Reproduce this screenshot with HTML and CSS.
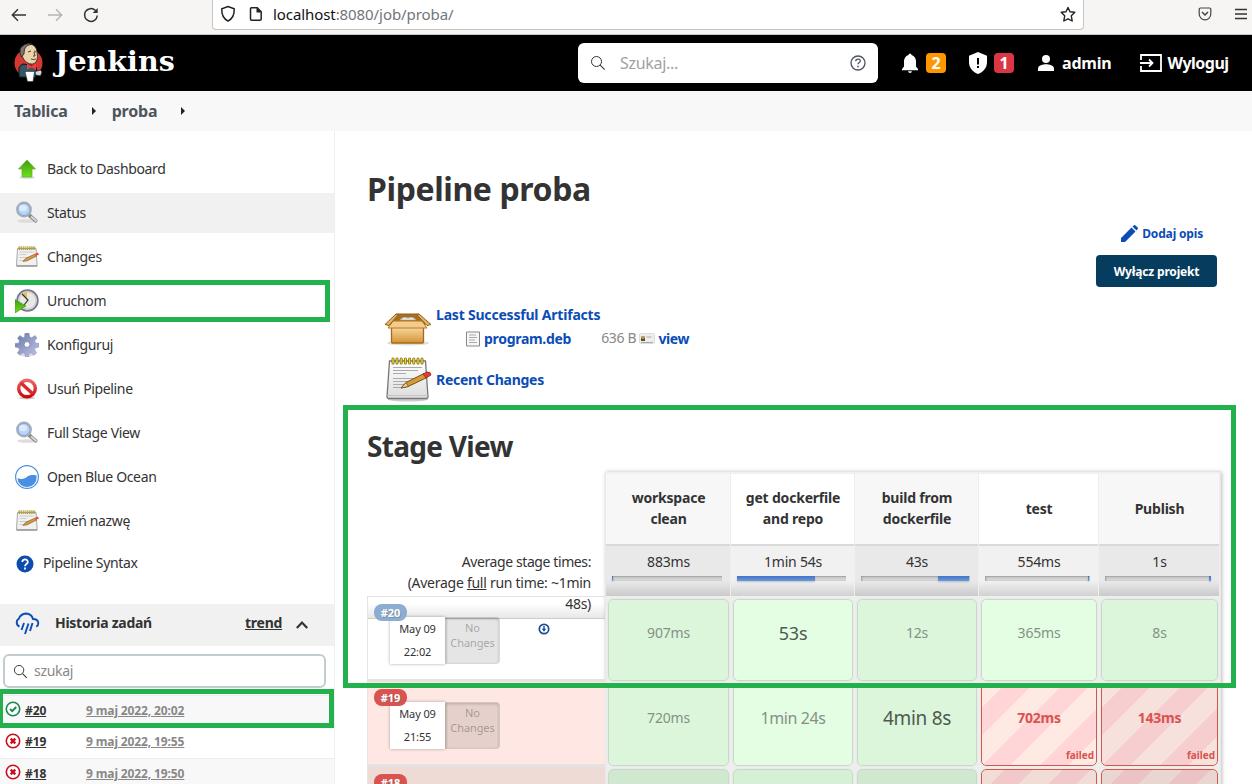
FILE: index.html
```html
<!DOCTYPE html>
<html lang="pl">
<head>
<meta charset="utf-8">
<title>proba [Jenkins]</title>
<link rel="stylesheet" href="styles.css">
</head>
<body>
<svg class="defs" width="0" height="0" aria-hidden="true">
  <defs>
    <linearGradient id="g-green" x1="0" y1="0" x2="0" y2="1"><stop offset="0" stop-color="#3f9c12"/><stop offset="1" stop-color="#6fe01a"/></linearGradient>
    <linearGradient id="g-paper" x1="0" y1="0" x2="0" y2="1"><stop offset="0" stop-color="#fff"/><stop offset="1" stop-color="#dcdcdc"/></linearGradient>
    <linearGradient id="g-box" x1="0" y1="0" x2="0" y2="1"><stop offset="0" stop-color="#fbd9a0"/><stop offset="1" stop-color="#d29438"/></linearGradient>
    <linearGradient id="g-red" x1="0" y1="0" x2="0" y2="1"><stop offset="0" stop-color="#e96a6a"/><stop offset="1" stop-color="#cc0a0a"/></linearGradient>
    <linearGradient id="g-gear" x1="0" y1="0" x2="1" y2="1"><stop offset="0" stop-color="#6178a8"/><stop offset="1" stop-color="#c9c5ea"/></linearGradient>
    <symbol id="i-search" viewBox="0 0 24 24">
      <ellipse cx="12" cy="20" rx="10" ry="1.800" fill="#ddd"/>
      <path d="M14.500 14.500l6.300 5.300" stroke="#888" stroke-width="3.600" stroke-linecap="round"/>
      <path d="M16.500 16l4.500 3.800" stroke="#d9d9d9" stroke-width="1.800" stroke-linecap="round"/>
      <circle cx="9" cy="8.500" r="7.200" fill="#b9d4f5" stroke="#aaa" stroke-width="1.400"/>
      <circle cx="9" cy="8.500" r="6" fill="none" stroke="#7fa3d6" stroke-width="1"/>
      <ellipse cx="8" cy="7" rx="4" ry="3.300" fill="#dcebfc"/>
    </symbol>
    <symbol id="i-note" viewBox="0 0 48 48">
      <ellipse cx="24" cy="44.500" rx="20" ry="2" fill="#ccc"/>
      <path d="M5.500 6h36l2.500 36a1.500 1.500 0 0 1-1.500 1.500h-38A1.500 1.500 0 0 1 3 42z" fill="url(#g-paper)" stroke="#777" stroke-width="1.300"/>
      <path d="M3.500 40.500h40" stroke="#c4c4c4"/>
      <path d="M9 12.500h29M9 15.500h25M9 18.500h13M9 23.500h27M9 26.500h24M9 29.500h20M9 32.500h10" stroke="#aaa" stroke-width="1"/>
      <path d="M9 4v4M13 4v4M17.200 4v4M21.400 4v4M25.600 4v4M29.800 4v4M34 4v4M38 4v4" stroke="#85700a" stroke-width="3" stroke-linecap="round"/>
      <path d="M9 4v4M13 4v4M17.200 4v4M21.400 4v4M25.600 4v4M29.800 4v4M34 4v4M38 4v4" stroke="#ecd83b" stroke-width="1.400" stroke-linecap="round"/>
      <path d="M17 33l5-5.500 18-9 3 4-19 9z" fill="#d69b39" stroke="#78500f"/>
      <path d="M17 33l5-5.500 2.500 4z" fill="#e8cf9f" stroke="#78500f" stroke-width=".8"/>
      <path d="M39 19l4-2q4-.5 4 3l-5 3z" fill="#e33c35" stroke="#8c2b20" stroke-width=".8"/>
    </symbol>
    <symbol id="i-notesm" viewBox="0 0 24 24">
      <path d="M2.500 3.500h18.500l1.200 17.300H1.500z" fill="#f1f1f1" stroke="#a8a8a8"/>
      <path d="M1.500 21h20.700" stroke="#999" stroke-width="1.500"/>
      <path d="M4.500 7h14M4.500 9.500h7M4.500 12.500h12M4.500 15.500h6" stroke="#ccc"/>
      <path d="M3.500 3.200h17" stroke="#9b8e32" stroke-width="3.200" stroke-dasharray="1.500 .6"/>
      <path d="M3.700 2.700h16.500" stroke="#d4c04c" stroke-width="1.500" stroke-dasharray="1 1.100"/>
      <path d="M8 16.300l3-3.100 9-4 1.600 1.800-9.600 4.800z" fill="#d89d40" stroke="#8e6524" stroke-width=".8"/>
      <path d="M19.500 9l3.500-1.400 1 2-3.300 1.500z" fill="#e6523e"/>
    </symbol>
    <symbol id="i-fail" viewBox="0 0 16 16">
      <circle cx="8" cy="8" r="6.700" fill="#fff" stroke="#cb0f1f" stroke-width="1.600"/>
      <path d="M5.700 5.700l4.600 4.600M10.300 5.700l-4.600 4.600" stroke="#cb0f1f" stroke-width="2.400"/>
    </symbol>
    <symbol id="i-lens" viewBox="0 0 16 16">
      <circle cx="6.500" cy="6.500" r="5" fill="none" stroke="currentColor" stroke-width="1"/><path d="M10.200 10.200l4.500 4.500" stroke="currentColor" stroke-width="1.100"/>
    </symbol>
  </defs>
</svg>

<div class="window">
  <div class="browser">
    <div class="nav">
      <svg width="16" height="16" viewBox="0 0 16 16" fill="none" stroke="#2e3436" stroke-width="1.400"><path d="M15 8H1.500M7 2.300L1.300 8 7 13.700"/></svg>
      <svg width="16" height="16" viewBox="0 0 16 16" fill="none" stroke="#b4b4b3" stroke-width="1.400"><path d="M1 8h13.500M9 2.300L14.700 8 9 13.700"/></svg>
      <svg width="16" height="16" viewBox="0 0 16 16" fill="none" stroke="#2e3436" stroke-width="1.500"><path d="M14.300 8.500A6.400 6.400 0 1 1 12.300 3.300l1.500 1.500"/><path d="M14.700 1v5h-5z" fill="#2e3436" stroke="none"/></svg>
    </div>
    <div class="urlbar">
      <svg width="16" height="18" viewBox="0 0 16 18" fill="none" stroke="#222" stroke-width="1.500"><path d="M8 1.500l6.200 2.300c.3 5-1 9.500-6.200 12.400C2.800 13.300 1.500 8.800 1.800 3.800z"/></svg>
      <svg class="page" width="14" height="16" viewBox="0 0 14 16" fill="none" stroke="#222" stroke-width="1.500"><path d="M2.500 1.800h5.800l3.900 4V13a1.200 1.200 0 0 1-1.200 1.200H2.700A1.200 1.200 0 0 1 1.500 13V2.800a1 1 0 0 1 1-1z"/><path d="M7.500 1.500v5h5z" fill="#222" stroke="none"/></svg>
      <span class="url">localhost<i>:8080/job/proba/</i></span>
      <svg class="star" width="16" height="17" viewBox="0 0 16 17" fill="none" stroke="#222" stroke-width="1.400" stroke-linejoin="round"><path d="M8 1.500l2 4.300 4.800.5-3.500 3.500.9 5.200L8 12.800 3.800 15l.9-5.200L1.200 6.300l4.800-.5z"/></svg>
    </div>
    <div class="tools">
      <svg width="14" height="16" viewBox="0 0 14 16" fill="none" stroke="#444" stroke-width="1.200"><path d="M2.500 2h9a1.300 1.300 0 0 1 1.300 1.300V8A5.800 5.800 0 0 1 1.200 8V3.300A1.300 1.300 0 0 1 2.500 2z"/><path d="M4 6l3 3 3-3" stroke-width="1.500"/></svg>
      <svg width="14" height="14" viewBox="0 0 14 14" stroke="#333" stroke-width="1.400"><path d="M1 3.500h12M1 8h12M1 12.500h12"/></svg>
    </div>
  </div>

  <header class="header">
    <div class="brand">
      <svg width="30" height="42" viewBox="0 0 30 42">
        <circle cx="14.500" cy="21" r="14" fill="#d33833"/>
        <path d="M5 35V26q1-3 4-4l7 1 6 2 1 5-2 6z" fill="#33576a" stroke="#111"/>
        <path d="M8 14Q4 5 13 2q9-1 10 8 2 10-4 12-7 1-11-8z" fill="#ead3ad" stroke="#222" stroke-width=".8"/>
        <path d="M7.500 15Q3 6 11 2.500q4-1.500 7-.5-5 1-7 4-1 3-1 6z" fill="#7b7773" stroke="#222" stroke-width=".8"/>
        <path d="M14 10l3-1m3 0l2 1m-5 7q2 1 5 0m-2-7l1 4h-2" stroke="#3a2d24" fill="none" stroke-width=".9"/>
        <path d="M13 21.500l4.500 2.300 4.500-2v6l-4.500-2.300-4.500 2z" fill="#ef3d3a"/>
        <path d="M11 29.500h9.500l-1.500 10h-5.500z" fill="#fff" stroke="#333" stroke-width=".6"/>
        <path d="M21 29.500l5.500-1.500 1.500 2-1.500 4-5-1z" fill="#d5d9dc" stroke="#222" stroke-width=".8"/>
      </svg>
      <span>Jenkins</span>
    </div>
    <div class="search">
      <svg class="lens" width="16" height="16"><use href="#i-lens"/></svg>
      <span>Szukaj...</span>
      <svg width="16" height="16" viewBox="0 0 16 16" fill="none" stroke="#4d545d" stroke-width="1.300"><circle cx="8" cy="8" r="7"/><path d="M5.700 6.200C5.800 3.300 10.400 3.400 10.300 6c0 1.600-2.300 1.500-2.300 3.300"/><path d="M8 10.800v1.500" stroke-width="1.600"/></svg>
    </div>
    <svg class="bell" width="18" height="22" viewBox="0 0 18 22" fill="#fff"><path d="M9 1.500q1.300 0 1.600 1.500Q15 4.500 15 10v4.500l2 2.500v1.200H1V17l2-2.500V10q0-5.500 4.400-7Q7.700 1.500 9 1.500zM7 19.200h4q-.3 1.800-2 1.800t-2-1.800z"/></svg>
    <span class="count orange">2</span>
    <svg class="shield" width="18" height="22" viewBox="0 0 18 22"><path d="M9 0l9 3.700V10c0 6-4 10-9 12C4 20 0 16 0 10V3.700z" fill="#fff"/><path d="M9 6v6.500M9 14v2" stroke="#000" stroke-width="2"/></svg>
    <span class="count red">1</span>
    <svg class="person" width="18" height="18" viewBox="0 0 18 18" fill="#fff"><circle cx="9" cy="5" r="4"/><path d="M1 17v-2.500c0-3 5-4.200 8-4.200s8 1.200 8 4.200V17z"/></svg>
    <span class="user">admin</span>
    <svg class="exit" width="22" height="20" viewBox="0 0 22 20" fill="none" stroke="#fff" stroke-width="1.800"><path d="M1 7V2h20v16H1v-5M0 10h12M9 6.500l3.500 3.500L9 13.500"/></svg>
    <span class="logout">Wyloguj</span>
  </header>

  <nav class="crumbs"><span>Tablica</span><b></b><span>proba</span><b></b></nav>

  <div class="main">
    <aside class="side">
      <div class="task"><svg width="24" height="24" viewBox="0 0 24 24"><ellipse cx="12" cy="20.500" rx="8" ry="1.500" fill="#ddd"/><path d="M12 3l8.500 9h-3.500v8H7v-8H3.500z" fill="url(#g-green)" stroke="#5caf35" stroke-width=".7"/></svg><span>Back to Dashboard</span></div>
      <div class="task active"><svg width="24" height="24"><use href="#i-search"/></svg><span>Status</span></div>
      <div class="task"><svg width="24" height="24"><use href="#i-notesm"/></svg><span>Changes</span></div>
      <div class="task"><svg width="24" height="24" viewBox="0 0 24 24"><circle cx="12.500" cy="11.500" r="10.300" fill="#e8e8e4" stroke="#777792" stroke-width="1.800"/><circle cx="12.500" cy="11.500" r="8.500" fill="none" stroke="#c9c9c9"/><path d="M12 11L7 5l5-2z" fill="#e6bf43"/><path d="M7 5l6 6-4 5" stroke="#333" stroke-width="1.200" fill="none"/><path d="M0 10.500l11 6.500L0 24z" fill="url(#g-green)" stroke="#4b9b25" stroke-width=".7"/></svg><span>Uruchom</span></div>
      <div class="task"><svg width="24" height="24" viewBox="0 0 24 24"><ellipse cx="12" cy="21.500" rx="8" ry="2" fill="#ddd"/><path d="M10 0h4l.7 4 2 .8L20 2.500 22 5l-2.500 3 .8 2 3.700.5v3.500l-3.700.7-.8 2 2 3.300-2.500 2-3-2.200-2 .7L13.500 24h-3l-.7-3.500-2-.8-3 2.300-2.500-2L4.500 17l-.8-2.300L0 14v-3.500l3.700-.5.8-2L2.500 5 5 2.500l3 2.200 1.500-.7z" fill="url(#g-gear)" stroke="#8c94bb" stroke-width=".6"/><circle cx="12" cy="11.500" r="3" fill="#fff" stroke="#8089b0"/></svg><span>Konfiguruj</span></div>
      <div class="task"><svg width="24" height="24" viewBox="0 0 24 24"><ellipse cx="12" cy="21" rx="8" ry="1.500" fill="#ccc"/><circle cx="12" cy="11.500" r="8.300" fill="#fff" stroke="url(#g-red)" stroke-width="3.400"/><path d="M6 6l12 11" stroke="#db2828" stroke-width="3.400"/></svg><span>Usuń Pipeline</span></div>
      <div class="task"><svg width="24" height="24"><use href="#i-search"/></svg><span>Full Stage View</span></div>
      <div class="task"><svg width="24" height="24" viewBox="0 0 24 24"><circle cx="12" cy="12" r="11.400" fill="#fff" stroke="#4a90e2" stroke-width="1.200"/><path d="M2.400 13c3.600 1.500 6.600 1 9.100-.8 3.500-2.700 6.500-2.200 10.100-1.700v1.500A9.600 9.600 0 0 1 2.400 13z" fill="#4a90e2"/></svg><span>Open Blue Ocean</span></div>
      <div class="task"><svg width="24" height="24"><use href="#i-notesm"/></svg><span>Zmień nazwę</span></div>
      <div class="task syntax"><svg width="18" height="18" viewBox="0 0 18 18"><circle cx="9" cy="9" r="8.500" fill="#0b4cad"/><path d="M6.300 7c0-3.500 5.600-3.400 5.500 0 0 2-2.800 2-2.800 4.200M9 12.500v2" stroke="#fff" stroke-width="1.800" fill="none"/></svg><span>Pipeline Syntax</span></div>

      <div class="history">
        <svg width="26" height="24" viewBox="0 0 26 24" fill="none" stroke="#0b4cb5" stroke-width="1.900"><path d="M5.500 14.500A4.300 4.300 0 0 1 4.800 6.800Q6.500 2 12 1.500q5.500.3 7 5.500 5 0 5.300 4 0 2.500-2 3.700"/><path d="M10 11L7.500 18M14.500 11.500L11 22M18.500 11l-2.500 8"/></svg>
        <strong>Historia zadań</strong><u>trend</u>
        <svg class="chev" width="14" height="10" viewBox="0 0 14 10" fill="none" stroke="#333" stroke-width="2.200"><path d="M1.800 8L7 2.500 12.200 8"/></svg>
      </div>
      <div class="filter"><svg width="15" height="15"><use href="#i-lens"/></svg><span>szukaj</span></div>
      <div class="builds">
        <div class="build odd"><svg width="16" height="16" viewBox="0 0 16 16"><circle cx="8" cy="8" r="6.700" fill="#fff" stroke="#158a4b" stroke-width="1.600"/><path d="M5 8l2.200 2.200L11.200 6" stroke="#158a4b" stroke-width="1.900" fill="none"/></svg><u class="num">#20</u><u class="when">9 maj 2022, 20:02</u></div>
        <div class="build"><svg width="16" height="16"><use href="#i-fail"/></svg><u class="num">#19</u><u class="when">9 maj 2022, 19:55</u></div>
        <div class="build odd"><svg width="16" height="16"><use href="#i-fail"/></svg><u class="num">#18</u><u class="when">9 maj 2022, 19:50</u></div>
      </div>
    </aside>

    <main class="content">
      <h1>Pipeline proba</h1>
      <div class="actions">
        <div class="add"><svg width="17" height="17" viewBox="0 0 17 17" fill="#0b4cb5"><path d="M0 17v-4L10.500 2.500l4 4L4 17zM11.500 1.500L13 .2q.8-.5 1.500.2l2.200 2.200q.6.800 0 1.400L15.500 5.500z"/></svg><span>Dodaj opis</span></div>
        <div class="disable"><span>Wyłącz projekt</span></div>
      </div>
      <div class="artifact">
        <svg width="48" height="36" viewBox="0 0 48 36"><ellipse cx="24" cy="31" rx="21" ry="2.500" fill="#ddd"/><path d="M12 2h23l7 10H5z" fill="#a8701e" stroke="#8b5c17"/><path d="M16 8q3-4 8-2 5-2 8 2z" fill="#eee" stroke="#aaa" stroke-width=".7"/><path d="M7.500 15h32v15a1 1 0 0 1-1 1h-30a1 1 0 0 1-1-1z" fill="url(#g-box)" stroke="#a56b15" stroke-width="1.300"/><path d="M9 9h29l5 7H4z" fill="#f5cb8b" stroke="#b07a25"/><path d="M12 2L1 12.500l4 1L14 3zM35 2l12 10.500-4 1L33 3z" fill="#e6b469" stroke="#90601b"/><path d="M9 20h29" stroke="#edc17a"/></svg>
        <div class="files">
          <a>Last Successful Artifacts</a>
          <div class="file"><svg width="16" height="16" viewBox="0 0 16 16"><path d="M1.500 1h13v14h-13z" fill="#f7f7f7" stroke="#888"/><path d="M4 4h7M4 6.500h8M4 9h6M4 11.500h8" stroke="#aaa"/></svg><a>program.deb</a><span>636 B</span><svg class="card" width="17" height="12" viewBox="0 0 17 12"><rect x=".5" y=".5" width="15" height="10" rx="1" fill="#eee" stroke="#ddd"/><rect x="2" y="3" width="4" height="4" fill="#cc9b52"/><path d="M2 8V5l2 1 2-1v3z" fill="#415c35"/><path d="M7.500 4h5M2 9.500h12" stroke="#aaa"/></svg><a class="view">view</a></div>
        </div>
      </div>
      <div class="recent"><svg width="48" height="48"><use href="#i-note"/></svg><a>Recent Changes</a></div>
      <h2>Stage View</h2>

      <div class="stages">
        <div class="runs">
          <div class="average"><span>Average stage times:</span><br>(Average <u>full</u> run time: ~1min<br>48s)</div>
          <div class="run ok"><span class="badge">#20</span><div class="stamp"><div class="date">May 09<br>22:02</div><div class="nochange">No<br>Changes</div></div><svg class="dl" width="12" height="12" viewBox="0 0 12 12"><circle cx="6" cy="6" r="4.700" fill="#fff" stroke="#204d91" stroke-width="1.700"/><path d="M5.300 3h1.400v2.700h1.600L6 8.800 3.700 5.700h1.600z" fill="#204d91"/></svg></div>
          <div class="run bad"><span class="badge">#19</span><div class="stamp"><div class="date">May 09<br>21:55</div><div class="nochange">No<br>Changes</div></div></div>
          <div class="run bad dark"><span class="badge">#18</span></div>
        </div>
        <div class="grid">
          <div class="head alt">workspace<br>clean</div><div class="head">get dockerfile<br>and repo</div><div class="head alt">build from<br>dockerfile</div><div class="head">test</div><div class="head alt">Publish</div>
          <div class="avg alt"><span>883ms</span><i><b class="p1"></b></i></div><div class="avg"><span>1min 54s</span><i><b class="p2"></b></i></div><div class="avg alt"><span>43s</span><i><b class="p3"></b></i></div><div class="avg"><span>554ms</span><i><b class="p4"></b></i></div><div class="avg alt"><span>1s</span><i><b class="p5"></b></i></div>
          <div class="cell alt"><span>907ms</span></div><div class="cell"><span class="t4">53s</span></div><div class="cell alt"><span>12s</span></div><div class="cell"><span>365ms</span></div><div class="cell alt"><span>8s</span></div>
          <div class="cell alt"><span>720ms</span></div><div class="cell"><span class="t3">1min 24s</span></div><div class="cell alt"><span class="t5">4min 8s</span></div><div class="cell failed"><span>702ms</span><em>failed</em></div><div class="cell failed alt"><span>143ms</span><em>failed</em></div>
          <div class="cell alt dim"></div><div class="cell dim"></div><div class="cell alt dim"></div><div class="cell failed dim"></div><div class="cell failed alt dim"></div>
        </div>
      </div>
    </main>
  </div>
  <div class="mark m1"></div><div class="mark m2"></div><div class="mark m3"></div>
</div>
</body>
</html>
```

FILE: styles.css
```css
* { box-sizing: border-box; }
body { margin: 0; font-family: "Noto Sans", sans-serif; font-size: 14px; color: #333; background: #fff; }
svg { display: block; flex: none; }
.defs { position: absolute; }
.window { position: relative; width: 1252px; height: 784px; overflow: hidden; }

.browser { display: flex; height: 35px; background: #f6f5f4; border-bottom: 1px solid #c9c5c1; }
.nav { display: flex; gap: 20px; width: 212px; padding: 7px 0 0 11px; }
.urlbar { display: flex; width: 872px; height: 30px; padding: 5px 7px 0 7px; background: #fff; border: 1px solid #c8c3bd; border-top: 0; border-radius: 0 0 4px 4px; }
.urlbar .page { margin: 1px 0 0 13px; }
.url { margin: -1px 0 0 10px; font-size: 15px; line-height: 20px; color: #111; letter-spacing: -.08px; }
.url i { font-style: normal; color: #74747a; }
.star { margin-left: auto; margin-top: 1px; }
.tools { display: flex; gap: 22px; padding: 6px 0 0 114px; }

.header { display: flex; align-items: center; height: 56px; background: #000; color: #fff; font-size: 16px; font-weight: 700; }
.brand { display: flex; align-items: center; width: 578px; padding-left: 14px; font: 700 28.5px "DejaVu Serif", serif; }
.brand span { margin: -4px 0 0 11px; }
.search { display: flex; align-items: center; width: 300px; height: 40px; padding: 0 12px; background: #fff; border-radius: 6px; color: #a0a0a3; font-weight: 400; letter-spacing: -.3px; }
.search .lens { color: #333; margin-right: 14px; }
.search span { flex: 1; }
.bell { margin-left: 23px; }
.count { width: 20px; height: 20px; margin-left: 7px; border-radius: 4px; text-align: center; line-height: 20px; }
.orange { background: #ff9800; }
.red { background: #dc3545; }
.shield { margin-left: 23px; }
.person { margin-left: 23px; }
.user { margin-left: 7px; letter-spacing: -.2px; }
.exit { margin-left: 29px; }
.logout { margin-left: 5px; letter-spacing: -.5px; }

.crumbs { display: flex; align-items: center; height: 40px; padding-left: 14px; background: #f8f8f8; color: #4d545d; font-size: 16px; font-weight: 700; letter-spacing: -.2px; }
.crumbs b { width: 0; margin: 0 16px 0 24px; border: 4px solid transparent; border-left-color: #222; border-right: 0; }

.main { display: flex; height: 653px; }
.side { width: 335px; flex: none; padding-top: 18px; border-right: 1px solid #eee; }
.task { display: flex; align-items: center; height: 40px; margin-bottom: 4px; padding-left: 15px; letter-spacing: -.35px; }
.task span { margin: -2px 0 0 8px; }
.active { background: #f1f1f1; }
.syntax { height: 37px; padding-left: 16px; }
.syntax span { margin-left: 9px; }
.history { display: flex; align-items: center; height: 42px; margin-top: 22px; padding: 0 0 3px 14px; background: #f1f1f1; }
.history strong { width: 190px; margin: -2px 0 0 15px; letter-spacing: -.28px; }
.history u { margin-top: -2px; font-weight: 700; letter-spacing: -.25px; }
.history .chev { margin: 3px 0 0 13px; }
.filter { display: flex; align-items: center; width: 323px; height: 34px; margin: 8px 0 7px 3px; padding-left: 8px; border: 2px solid #c3ccd1; border-radius: 6px; color: #888; letter-spacing: -.3px; }
.filter svg { color: #333; }
.filter span { margin: -2px 0 0 6px; }
.build { display: flex; height: 32px; padding: 5px 0 0 5px; border-top: 1px solid #eee; font-size: 12px; font-weight: 700; line-height: 20px; letter-spacing: -.12px; }
.odd { background: #f8f8f8; }
.build:nth-child(2) { height: 31px; line-height: 18px; }
.num { width: 61px; margin-left: 4px; }
.when { color: #888; }

.content { flex: 1; min-width: 0; padding: 36px 0 0 33px; }
h1 { margin: 0; margin-left: -1px; font-size: 32px; line-height: 44px; letter-spacing: -.4px; }
.actions { display: flex; flex-direction: column; align-items: flex-end; width: 849px; margin-top: 11px; color: #0b4cb5; font-size: 12px; font-weight: 700; letter-spacing: -.17px; }
.add { display: flex; align-items: center; height: 22px; padding-right: 14px; }
.add span { margin-left: 4px; }
.disable { width: 121px; height: 32px; margin-top: 11px; border-radius: 4px; background: #063c5e; color: #fff; line-height: 34px; text-align: center; }
.content a { color: #0b4cb5; font-weight: 700; letter-spacing: -.2px; }
.artifact { display: flex; padding: 16px 0 0 16px; }
.artifact > svg { margin-top: 9px; }
.files { margin-left: 4px; line-height: 24px; }
.file { display: flex; align-items: center; padding-left: 29px; }
.file a { margin-left: 3px; }
.file a:first-of-type { letter-spacing: -.3px; }
.file span { margin: -2px 0 0 30px; color: #888; letter-spacing: -.3px; }
.file .card { margin-left: 3px; }
.content .view { margin-left: 2px; letter-spacing: -.4px; }
.recent { display: flex; align-items: center; height: 48px; margin-top: 4px; padding-left: 16px; }
.recent a { margin: 1px 0 0 4px; letter-spacing: -.27px; }
h2 { margin: 24px 0 7px -1px; font-size: 28px; line-height: 38px; letter-spacing: -.7px; }

.stages { display: flex; margin-left: -1px; }
.runs { position: relative; width: 238px; padding-top: 124px; }
.average { position: absolute; z-index: 2; top: 79px; right: 0; width: 237px; height: 68px; padding-right: 14px; text-align: right; line-height: 21px; letter-spacing: -.27px; border-bottom: 1px solid #ccc; background: linear-gradient(transparent 52px, rgba(0,0,0,.09)); }
.average span { letter-spacing: -.4px; }
.run { position: relative; height: 85px; border: 1px solid #e3e3e3; border-right: 0; border-bottom-width: 2px; }
.bad { background: #ffe8e3; }
.dark { background: #efdbd6; }
.badge { position: absolute; z-index: 3; top: 7px; left: 6px; width: 33px; height: 17px; border-radius: 8px; background: #d9534f; color: #fff; font-size: 11px; font-weight: 700; line-height: 17px; text-align: center; text-shadow: 1px 1px #7779; }
.ok .badge { background: #8badd2; }
.stamp { position: relative; z-index: 2; display: flex; width: 110px; height: 47px; margin: 20px 0 0 22px; letter-spacing: -.1px; }
.date { width: 55px; padding: 0; text-align: center; font-size: 11px; line-height: 23px; background: #fff; box-shadow: 0 0 3px #0005; }
.nochange { width: 55px; padding-top: 2px; text-align: center; font-size: 11px; line-height: 15px; color: #0000004d; background: rgba(0,0,0,.1); border: 1px solid #0000000d; border-radius: 0 4px 4px 0; box-shadow: inset 0 1px 3px #0003; }
.dl { position: absolute; left: 170px; top: 26px; }
.grid { display: grid; grid-template-columns: 125px 124px 124px 120px 121px; grid-template-rows: 74px 51px 85px 85px 85px; width: 616px; background: #eee; border: 1px solid #e8e8e8; border-top: 0; box-shadow: 1px 0 4px #0004; letter-spacing: -.2px; }
.head { display: flex; align-items: center; justify-content: center; margin-right: 1px; padding: 1px 0 3px 1px; border-top: 2px solid #f1f1f1; border-bottom: 2px solid #d9d9d9; background: #fff; font-weight: 700; line-height: 21px; text-align: center; }
.head.alt { background: #f7f7f7; }
.avg { margin: 0 1px 1px 0; padding: 5px 8px 0 6px; text-align: center; line-height: 22px; background: linear-gradient(transparent 35px, #0002), #f1f1f1; }
.avg span { padding-left: 3px; }
.avg.alt { background: linear-gradient(transparent 35px, #0002), #e9e9e9; }
.avg i { display: block; height: 5px; margin-top: 3px; background: #d4d4d4; box-shadow: inset 1px 1px 2px #0004; }
.avg b { display: block; height: 5px; background: linear-gradient(#4373c5, #6a9bdc); box-shadow: 0 1px 2px #0003; }
.p1 { width: 1px; }
.p2 { width: 78px; }
.p3 { width: 31px; margin-left: 77px; }
.p4 { width: 1px; margin-left: 103px; }
.p5 { width: 2px; margin-left: 104px; }
.cell { position: relative; margin: 2px 2px 1px; border: 1px solid #ccd6cc; border-radius: 5px; background: #e3fee3; text-align: center; line-height: 66px; color: #859185; outline: 1px solid #e4eee4; }
.cell.alt { background: #dcf6dc; }
.dim, .cell.alt.dim { background: #d6f0d6; }
.cell.alt.dim { background: #cfe8cf; }
.t3 { font-size: 16px; letter-spacing: -.4px; }
.t4 { font-size: 18px; color: #4f594f; }
.t5 { font-size: 19px; color: #4f594f; letter-spacing: -.3px; }
.cell.failed { color: #d9534f; font-weight: 700; border: 1px solid #d9534f; background: repeating-linear-gradient(135deg, #ffe9e3 0 16px, #ffd5d7 16px 36px, #ffe9e3 36px 41px); }
.cell.failed.alt { background: repeating-linear-gradient(135deg, #f6e1dc 0 16px, #f7ced0 16px 36px, #f6e1dc 36px 41px); }
.cell.failed.dim { background: repeating-linear-gradient(135deg, #f1dcd6 0 16px, #f1c9ca 16px 36px, #f1dcd6 36px 41px); }
.cell.failed.alt.dim { background: repeating-linear-gradient(135deg, #ead6d0 0 16px, #ebc3c4 16px 36px, #ead6d0 36px 41px); }
.cell em { position: absolute; right: 2px; bottom: 0; font-size: 10px; font-style: normal; line-height: 20px; letter-spacing: 0; }

.mark { position: absolute; z-index: 5; border: 5px solid #22b14c; }
.m1 { left: 0; top: 280px; width: 330px; height: 42px; border-left-width: 4px; }
.m2 { left: 0; top: 689px; width: 334px; height: 39px; border-left-width: 3px; }
.m3 { left: 343px; top: 405px; width: 893px; height: 283px; }
```
